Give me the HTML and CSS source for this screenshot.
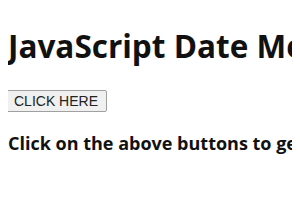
FILE: index.html
```html
<html>

<head>
    <meta charset="UTF-8">
    <title>JavaScript Date Methods</title>
    <link rel="stylesheet" href="styles.css">
</head>

<body>
    <h1 class="title">JavaScript Date Methods</h1>

    <button class="btn" onclick="showDate()">CLICK HERE</button>

    <p class="info" id="result">Click on the above buttons to get the date</p>

    <script>
        function showDate() {
            var d = new Date();
            document.getElementById("result").innerHTML = d.toDateString();
        }
    </script>
</body>

</html>
```
FILE: styles.css
```css
body {
    margin: 8px;
    font-family: "Open Sans", sans-serif;
    background-color: #ffffff;
    color: #111111;
    white-space: nowrap;
    overflow: hidden;
}

.title {
    font-size: 31.5px;
    font-weight: bold;
    margin-top: 16px;
    margin-bottom: 23px;
}

.btn {
    display: block;
    font-family: "Liberation Sans", Arial, sans-serif;
    font-size: 14px;
    color: #222222;
    background-color: #f0f0f0;
    border: 1px solid #a0a0a0;
    border-radius: 2px;
    padding: 2px 8px;
    margin-left: -3px;
}

.info {
    font-size: 18px;
    font-weight: bold;
    margin-top: 19px;
}
```
